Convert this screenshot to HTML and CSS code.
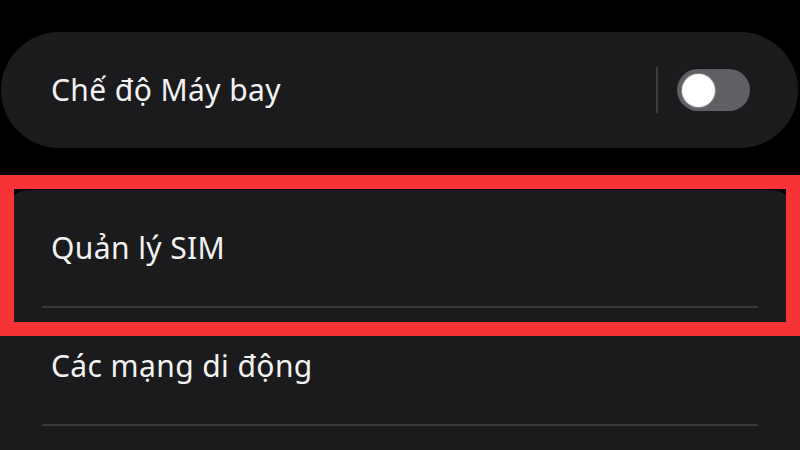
FILE: index.html
```html
<!DOCTYPE html>
<html>

<head>
  <title>Kết nối</title>
  <link rel="stylesheet" href="styles.css">
</head>

<body>
  <div class="settings">
    <!-- Airplane mode -->
    <div class="card card-single">
      <div class="row">
        <span class="row-title">Chế độ Máy bay</span>
        <div class="row-action">
          <span class="vbar"></span>
          <span class="switch"><span class="knob"></span></span>
        </div>
      </div>
    </div>

    <!-- SIM / networks -->
    <div class="card card-group">
      <div class="row">
        <span class="row-title">Quản lý SIM</span>
      </div>
      <div class="divider"></div>
      <div class="row">
        <span class="row-title">Các mạng di động</span>
      </div>
      <div class="divider"></div>
      <div class="highlight"></div>
    </div>
  </div>
</body>

</html>
```

FILE: styles.css
```css
body {
  margin: 0;
  background-color: #000;
  font-family: "Noto Sans", Roboto, sans-serif;
  color: #f2f2f2;
  overflow: hidden;
}

.settings {
  padding: 32px 2px 0 1px;
}

.card {
  background-color: #1b1b1d;
}

.card-single {
  height: 116px;
  border-radius: 58px;
  display: flex;
  align-items: center;
  padding: 0 48px 0 50px;
}

.card-group {
  position: relative;
  margin: 42px -2px 0 -1px;
  padding-bottom: 24px;
  border-radius: 30px 30px 0 0;
}

.row {
  flex: 1;
  display: flex;
  align-items: center;
  justify-content: space-between;
}

.card-group .row {
  height: 116px;
  padding: 0 48px 0 51px;
}

.row-title {
  font-size: 30px;
  line-height: 1;
  letter-spacing: 0.4px;
}

.row-action {
  display: flex;
  align-items: center;
  gap: 19px;
}

.vbar {
  width: 2px;
  height: 46px;
  background-color: #3c3c3e;
}

.switch {
  width: 73px;
  height: 42px;
  border-radius: 21px;
  background-color: #606064;
  display: flex;
  align-items: center;
  padding-left: 5px;
  box-sizing: border-box;
}

.knob {
  width: 33px;
  height: 33px;
  border-radius: 50%;
  background-color: #fff;
  box-shadow: 0 0 0 1px #8a8a8e;
}

.divider {
  height: 2px;
  margin: 0 42px;
  background-color: #3a3a3c;
}

/* red annotation box drawn over the SIM row */
.highlight {
  position: absolute;
  left: 0;
  top: -15px;
  width: 800px;
  height: 161px;
  border: 14px solid #f63437;
  box-sizing: border-box;
}
```
